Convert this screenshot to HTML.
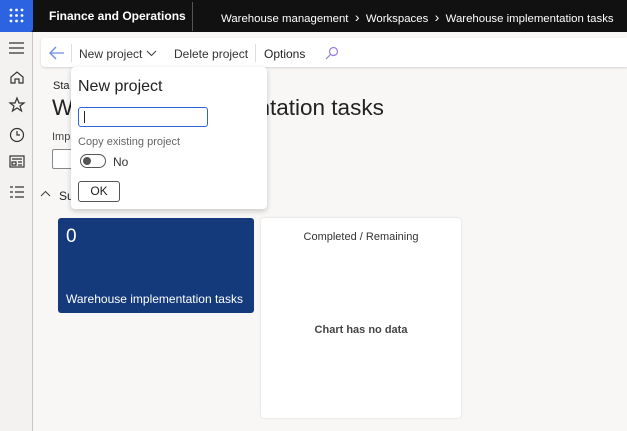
<!DOCTYPE html>
<html><head><style>
*{margin:0;padding:0;box-sizing:border-box}
body{width:627px;height:431px;overflow:hidden;background:#f8f7f6;font-family:"Liberation Sans",sans-serif;position:relative;color:#222}
.a{position:absolute}
</style></head><body>
<div class="a" style="left:0;top:0;width:627px;height:32px;background:#111"></div>
<div class="a" style="left:0;top:0;width:33px;height:32px;background:#2b63e0;border-radius:0 0 3px 0"></div>
<svg class="a" style="left:9px;top:8px" width="15" height="15"><g fill="#fff"><circle cx="2" cy="2" r="1.4"/><circle cx="7.5" cy="2" r="1.4"/><circle cx="13" cy="2" r="1.4"/><circle cx="2" cy="7.5" r="1.4"/><circle cx="7.5" cy="7.5" r="1.4"/><circle cx="13" cy="7.5" r="1.4"/><circle cx="2" cy="13" r="1.4"/><circle cx="7.5" cy="13" r="1.4"/><circle cx="13" cy="13" r="1.4"/></g></svg>
<div class="a" style="left:49px;top:9px;color:#fff;font-size:12px;font-weight:bold;white-space:nowrap">Finance and Operations</div>
<div class="a" style="left:192px;top:2px;width:1px;height:29px;background:#555"></div>
<div class="a" style="left:221px;top:9px;color:#fff;font-size:11.4px;white-space:nowrap">Warehouse management&nbsp;&nbsp;<span style="font-size:14px">›</span>&nbsp;&nbsp;Workspaces&nbsp;&nbsp;<span style="font-size:14px">›</span>&nbsp;&nbsp;Warehouse implementation tasks</div>
<div class="a" style="left:0;top:32px;width:33px;height:399px;background:#f3f2f1;border-right:1px solid #c8c6c4"></div>
<svg class="a" style="left:8px;top:40px" width="18" height="200" fill="none" stroke="#333" stroke-width="1.2">
<path d="M1 3h15M1 8h15M1 13h15"/>
<path d="M3 43v-6l6-5 6 5v6h-4v-4h-4v4z"/>
<path d="M9 58l2 5h5l-4 3 1.5 5-4.5-3-4.5 3 1.5-5-4-3h5z"/>
<circle cx="9" cy="95" r="6.5"/><path d="M9 91v4h3"/>
<rect x="2" y="116" width="14" height="11"/><path d="M4 119h10M4 122h4v3h-4zM10 122h4M10 125h4"/>
<path d="M2 147h3M7 147h9M2 152h3M7 152h9M2 157h3M7 157h9"/>
</svg>
<div class="a" style="left:41px;top:38px;width:586px;height:29px;background:#fff;border-radius:4px 0 0 4px;box-shadow:0 1px 2px rgba(0,0,0,.15)"></div>
<svg class="a" style="left:49px;top:46px" width="16" height="14" fill="none" stroke="#6b8de0" stroke-width="1.3"><path d="M15 7H2M7 1L1 7l6 6"/></svg>
<div class="a" style="left:71px;top:44px;width:1px;height:18px;background:#ddd"></div>
<div class="a" style="left:79px;top:47px;font-size:12px;color:#333;white-space:nowrap">New project</div>
<svg class="a" style="left:146px;top:50px" width="11" height="7" fill="none" stroke="#444" stroke-width="1.1"><path d="M1 1l4.5 4.5L10 1"/></svg>
<div class="a" style="left:174px;top:47px;font-size:12px;color:#333;white-space:nowrap">Delete project</div>
<div class="a" style="left:255px;top:44px;width:1px;height:18px;background:#ddd"></div>
<div class="a" style="left:264px;top:47px;font-size:12px;color:#222">Options</div>
<svg class="a" style="left:325px;top:46px" width="14" height="14" fill="none" stroke="#9a7be0" stroke-width="1.2"><circle cx="8.5" cy="5.5" r="4"/><path d="M5.5 8.5L1 13"/></svg>
<div class="a" style="left:53px;top:80px;font-size:11px">Sta</div>
<div class="a" style="left:52px;top:95px;font-size:22.5px;white-space:nowrap">Warehouse implementation tasks</div>
<div class="a" style="left:52px;top:131px;font-size:11px;color:#444">Imp</div>
<div class="a" style="left:52px;top:149px;width:40px;height:20px;border:1px solid #888;border-radius:2px;background:#fff"></div>
<svg class="a" style="left:40px;top:190px" width="11" height="7" fill="none" stroke="#444" stroke-width="1.1"><path d="M1 6l4.5-4.5L10 6"/></svg>
<div class="a" style="left:59px;top:189px;font-size:12px">Su</div>
<div class="a" style="left:71px;top:67px;width:196px;height:142px;background:#fff;border-radius:4px;box-shadow:0 2px 6px rgba(0,0,0,.2)"></div>
<div class="a" style="left:78px;top:78px;font-size:16px;color:#222">New project</div>
<div class="a" style="left:78px;top:107px;width:130px;height:20px;border:1px solid #2b63e0;border-radius:3px"></div>
<div class="a" style="left:84px;top:111px;width:1px;height:12px;background:#222"></div>
<div class="a" style="left:78px;top:136px;font-size:11px;color:#666">Copy existing project</div>
<div class="a" style="left:80px;top:154px;width:26px;height:14px;border:1px solid #555;border-radius:7px"></div>
<div class="a" style="left:83px;top:157px;width:8px;height:8px;border-radius:50%;background:#555"></div>
<div class="a" style="left:113px;top:155px;font-size:12px;color:#333">No</div>
<div class="a" style="left:78px;top:181px;width:42px;height:21px;border:1px solid #555;border-radius:3px;font-size:12px;text-align:center;line-height:19px">OK</div>
<div class="a" style="left:58px;top:218px;width:196px;height:95px;background:#143a7c;border-radius:3px;color:#fff"></div>
<div class="a" style="left:66px;top:226px;font-size:19px;color:#fff">0</div>
<div class="a" style="left:66px;top:292px;font-size:12px;color:#fff;white-space:nowrap">Warehouse implementation tasks</div>
<div class="a" style="left:261px;top:218px;width:200px;height:200px;background:#fff;border-radius:3px;box-shadow:0 0 2px rgba(0,0,0,.15)"></div>
<div class="a" style="left:261px;top:231px;width:200px;text-align:center;font-size:11px;color:#333">Completed / Remaining</div>
<div class="a" style="left:261px;top:324px;width:200px;text-align:center;font-size:11px;font-weight:bold;color:#444">Chart has no data</div>
</body></html>
